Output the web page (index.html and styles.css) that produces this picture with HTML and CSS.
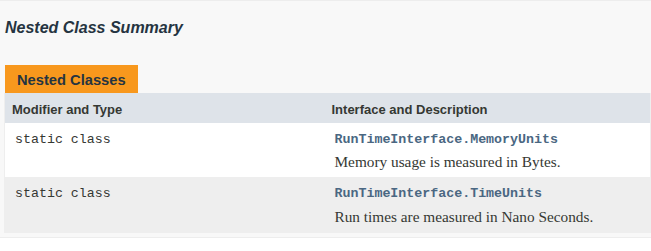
FILE: index.html
```html
<!DOCTYPE html>
<html lang="en">
<head>
<meta charset="utf-8">
<title>Nested Class Summary</title>
<link rel="stylesheet" href="styles.css">
</head>
<body>
<section class="summary">
  <h3 class="summary-title">Nested Class Summary</h3>
  <table class="member-summary">
    <caption class="caption"><span class="caption-tab">Nested Classes</span></caption>
    <colgroup>
      <col class="col-first">
      <col class="col-last">
    </colgroup>
    <thead>
      <tr>
        <th class="th-first">Modifier and Type</th>
        <th class="th-last">Interface and Description</th>
      </tr>
    </thead>
    <tbody>
      <tr class="row-a">
        <td class="td-first"><code class="mono">static class</code></td>
        <td class="td-last">
          <code class="mono"><a class="link" href="#">RunTimeInterface.MemoryUnits</a></code>
          <div class="block">Memory usage is measured in Bytes.</div>
        </td>
      </tr>
      <tr class="row-b">
        <td class="td-first"><code class="mono">static class</code></td>
        <td class="td-last">
          <code class="mono"><a class="link" href="#">RunTimeInterface.TimeUnits</a></code>
          <div class="block">Run times are measured in Nano Seconds.</div>
        </td>
      </tr>
    </tbody>
  </table>
</section>
</body>
</html>
```

FILE: styles.css
```css
html, body {
  margin: 0;
  padding: 0;
  background: #ffffff;
}

body {
  font-family: "Liberation Sans", Arial, sans-serif;
  font-size: 14px;
  color: #353833;
  line-height: 1.4;
}

.summary {
  background: #f8f8f8;
  border-top: 1px solid #ededed;
  border-bottom: 1px solid #ededed;
  padding: 0 0 4px 4px;
}

.summary-title {
  margin: 16px 0 16px 1px;
  font-size: 16px;
  font-style: italic;
  font-weight: bold;
  color: #253441;
}

.member-summary {
  width: 647px;
  border-collapse: collapse;
  border-spacing: 0;
  border-left: 1px solid #eeeeee;
  border-right: 1px solid #eeeeee;
  border-bottom: 1px solid #eeeeee;
  table-layout: fixed;
}

.caption {
  text-align: left;
  padding: 10px 0 0 1px;
  caption-side: top;
}

.caption-tab {
  display: inline-block;
  white-space: nowrap;
  background: #f8981d;
  color: #253441;
  font-weight: bold;
  font-size: 14.7px;
  height: 16px;
  padding: 5px 12px 7px 12px;
  vertical-align: top;
}

.col-first {
  width: 320px;
}

thead tr {
  background: #dee3e9;
}

th {
  text-align: left;
  font-size: 13px;
  font-weight: bold;
  color: #353833;
  padding: 8px 3px 3px 7px;
  vertical-align: top;
}

td {
  vertical-align: top;
  padding: 8px 3px 3px 10px;
}

.row-a {
  background: #ffffff;
}

.row-b {
  background: #eeeeee;
}

.mono {
  font-family: "Liberation Mono", "Courier New", monospace;
  font-size: 13.3px;
  color: #353833;
  display: block;
}

.link {
  color: #4a6782;
  text-decoration: none;
  font-weight: bold;
}

.block {
  font-family: "Liberation Serif", Georgia, serif;
  font-size: 15.3px;
  line-height: 20px;
  color: #353833;
  margin: 3px 10px 2px 0;
}
```
